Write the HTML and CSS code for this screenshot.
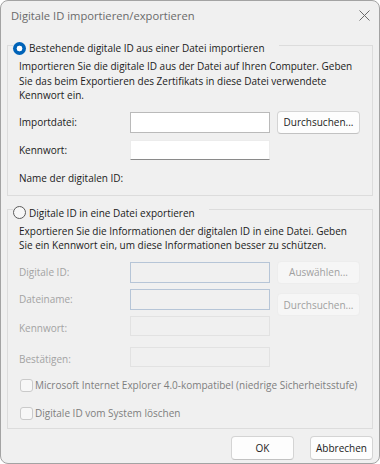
FILE: index.html
```html
<!DOCTYPE html>
<html lang="de">
<head>
    <meta charset="UTF-8">
    <title>Digitale ID importieren/exportieren</title>
    <link rel="stylesheet" href="styles.css">
</head>
<body>
    <div class="dialog">
        <div class="titlebar">
            <span class="title">Digitale ID importieren/exportieren</span>
            <span class="close">
                <svg width="11" height="11" viewBox="0 0 11 11"><path d="M0.5 0.5L10.5 10.5M10.5 0.5L0.5 10.5" stroke="#6b6b6b" stroke-width="1" fill="none"/></svg>
            </span>
        </div>

        <div class="content">
            <fieldset class="group">
                <legend><span class="radio checked"></span>Bestehende digitale ID aus einer Datei importieren</legend>
                <p class="desc">Importieren Sie die digitale ID aus der Datei auf Ihren Computer. Geben<br>Sie das beim Exportieren des Zertifikats in diese Datei verwendete<br>Kennwort ein.</p>
                <div class="row">
                    <label for="importFile">Importdatei:</label>
                    <input type="text" id="importFile" class="edit">
                    <button class="btn">Durchsuchen...</button>
                </div>
                <div class="row">
                    <label for="importPwd">Kennwort:</label>
                    <input type="password" id="importPwd" class="edit flat">
                </div>
                <div class="row">
                    <label>Name der digitalen ID:</label>
                </div>
            </fieldset>

            <fieldset class="group export">
                <legend><span class="radio"></span>Digitale ID in eine Datei exportieren</legend>
                <p class="desc">Exportieren Sie die Informationen der digitalen ID in eine Datei. Geben<br>Sie ein Kennwort ein, um diese Informationen besser zu schützen.</p>
                <div class="row">
                    <label>Digitale ID:</label>
                    <input type="text" class="edit" disabled>
                    <button class="btn" disabled>Auswählen...</button>
                </div>
                <div class="row">
                    <label>Dateiname:</label>
                    <input type="text" class="edit" disabled>
                    <button class="btn low" disabled>Durchsuchen...</button>
                </div>
                <div class="row">
                    <label class="low">Kennwort:</label>
                    <input type="password" class="edit faint" disabled>
                </div>
                <div class="row spaced">
                    <label class="low">Bestätigen:</label>
                    <input type="password" class="edit faint" disabled>
                </div>
                <div class="check first">
                    <span class="box"></span>Microsoft Internet Explorer 4.0-kompatibel (niedrige Sicherheitsstufe)
                </div>
                <div class="check">
                    <span class="box"></span>Digitale ID vom System löschen
                </div>
            </fieldset>

            <div class="buttons">
                <button class="btn">OK</button>
                <button class="btn">Abbrechen</button>
            </div>
        </div>
    </div>
</body>
</html>
```

FILE: styles.css
```css
body {
    margin: 0;
    background: #fff;
    font-family: 'Open Sans', 'Noto Sans', sans-serif;
    font-size: 10px;
    color: #1b1b1b;
}
.dialog {
    width: 380px;
    height: 464px;
    box-sizing: border-box;
    border: 1px solid #a3a3a3;
    border-radius: 8px;
    background: #f0f0f0;
    overflow: hidden;
}
.titlebar {
    display: flex;
    height: 34px;
    box-sizing: border-box;
    padding: 7px 9px 0 10px;
}
.title {
    font-size: 11.2px;
    line-height: 16px;
    color: #6a6a6a;
}
.close {
    margin-left: auto;
    margin-top: 2px;
    width: 11px;
    height: 11px;
}
.close svg {
    display: block;
}
.content {
    padding: 0 6px;
}
.group {
    margin: 0;
    padding: 4px 11px 5px;
    border: 1px solid #dcdcdc;
    min-width: 0;
}
.group legend {
    margin-left: -6px;
    padding: 6px 14px 0 0;
    line-height: 14px;
    white-space: nowrap;
}
.group.export {
    margin-top: 4px;
    padding-bottom: 8px;
}
.radio {
    display: inline-block;
    width: 13px;
    height: 13px;
    box-sizing: border-box;
    border: 1px solid #5b5b5b;
    border-radius: 50%;
    background: #f7f7f7;
    vertical-align: top;
    margin-top: 0.5px;
    margin-right: 3px;
}
.radio.checked {
    border: none;
    background: radial-gradient(circle, #fff 0 2.6px, #0063b8 3.2px);
}
.desc {
    margin: 0;
    line-height: 14.5px;
    white-space: nowrap;
}
.row {
    display: flex;
    align-items: center;
    height: 23px;
    margin-top: 5px;
}
.desc + .row {
    margin-top: 8px;
}
.export .row {
    margin-top: 4px;
}
.export .desc + .row {
    margin-top: 8px;
}
.export .row.spaced {
    margin-top: 8px;
}
.row label {
    flex: none;
    width: 111px;
}
.export .row label {
    color: #a3a3a3;
}
.row label.low {
    padding-top: 4px;
}
.edit {
    flex: none;
    width: 140px;
    height: 21px;
    box-sizing: border-box;
    margin: 0;
    padding: 0 4px;
    font: inherit;
    background: #fff;
    border: 1px solid #bababa;
    outline: none;
}
.edit.flat {
    height: 20px;
    border-color: #ececec;
    border-bottom-color: #8a8a8a;
}
.edit:disabled {
    background: #f0f0f0;
    border-color: #b6c5d7;
}
.edit.faint:disabled {
    height: 20px;
    border-color: #e2e2e2;
}
.btn {
    flex: none;
    width: 83px;
    height: 23px;
    margin: 0 0 0 7px;
    padding: 0;
    font: inherit;
    color: #1b1b1b;
    background: #fdfdfd;
    border: 1px solid #d4d4d4;
    border-bottom-color: #c2c2c2;
    border-radius: 4px;
}
.btn:disabled {
    color: #a0a0a0;
    background: #f6f6f6;
    border-color: #ededed;
}
.btn.low {
    margin-top: 11px;
}
.check {
    display: flex;
    align-items: center;
    height: 14px;
    margin-top: 14px;
    color: #7e7e7e;
    white-space: nowrap;
}
.check.first {
    margin-top: 9.5px;
}
.box {
    flex: none;
    width: 13px;
    height: 13px;
    box-sizing: border-box;
    margin-left: 1px;
    margin-right: 2px;
    border: 1px solid #cacaca;
    border-radius: 3px;
    background: #f7f7f7;
}
.buttons {
    display: flex;
    justify-content: flex-end;
    gap: 16px;
    margin-top: 7px;
}
.buttons .btn {
    width: 63px;
    height: 24px;
    margin: 0;
}
```
